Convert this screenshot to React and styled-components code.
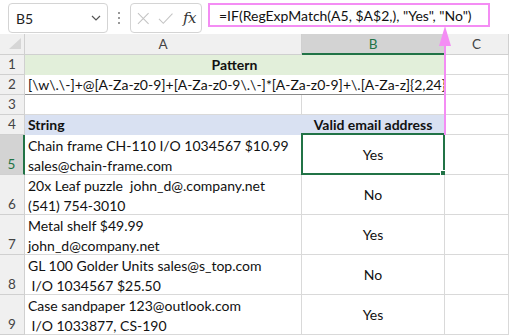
import React from "react";
import styled, { createGlobalStyle, css } from "styled-components";

const GREEN = "#217346";
const PINK = "#f48df4";
const GRID = "#d9d9d9";

const Global = createGlobalStyle`
  html, body { margin: 0; padding: 0; background: #ffffff; }
  body { font-family: Lato, "Liberation Sans", sans-serif; }
`;

const Page = styled.div`
  position: relative;
  width: 509px;
  height: 335px;
  overflow: hidden;
  background: #ffffff;
`;

const TopBar = styled.div`
  display: flex;
  align-items: flex-start;
  height: 34px;
  padding: 3px 0 0 8px;
  box-sizing: border-box;
  background: #ffffff;
`;

const NameBox = styled.div`
  box-sizing: border-box;
  width: 100px;
  height: 30px;
  border: 1px solid #d4d4d4;
  border-radius: 4px;
  display: flex;
  align-items: center;
  justify-content: space-between;
  padding: 0 6px 0 7px;
  font-size: 14px;
  color: #222;
`;

const Dots = styled.div`
  width: 22px;
  height: 30px;
  display: flex;
  flex-direction: column;
  align-items: center;
  justify-content: center;
  gap: 3px;
  & > span {
    width: 2px;
    height: 2px;
    border-radius: 1px;
    background: #777;
  }
`;

const FxBox = styled.div`
  box-sizing: border-box;
  width: 72px;
  height: 30px;
  border: 1px solid #d4d4d4;
  border-radius: 4px;
  display: flex;
  align-items: center;
  padding: 0 5px 0 6px;
  gap: 8px;
`;

const Fx = styled.span`
  font-family: "DejaVu Serif", "Liberation Serif", serif;
  font-style: italic;
  font-size: 15px;
  color: #333;
  margin-left: 2px;
  letter-spacing: -0.5px;
`;

const FormulaBox = styled.div`
  box-sizing: border-box;
  margin-left: 6px;
  width: 282px;
  height: 24px;
  border: 2px solid ${PINK};
  display: flex;
  align-items: center;
  padding-left: 9px;
  font-size: 14px;
  color: #111;
  white-space: pre;
`;

const Sheet = styled.div`
  display: grid;
  grid-template-columns: 25px 277px 143px 64px;
  grid-template-rows: 21px 20px 20px 20px 20px 40px 40px 40px 40px 40px;
  font-size: 14px;
`;

const Corner = styled.div`
  position: relative;
  background: #f0f0f0;
  border-right: 1px solid #d0d0d0;
  border-bottom: 1px solid #d0d0d0;
  box-sizing: border-box;
  &::after {
    content: "";
    position: absolute;
    right: 3px;
    bottom: 5px;
    width: 0;
    height: 0;
    border-left: 12px solid transparent;
    border-bottom: 11px solid #d6d6d6;
  }
`;

const ColHead = styled.div`
  box-sizing: border-box;
  display: flex;
  align-items: center;
  justify-content: center;
  background: ${(p) => (p.$active ? "#d3d3d3" : "#f0f0f0")};
  color: ${(p) => (p.$active ? GREEN : "#444")};
  border-right: 1px solid #d0d0d0;
  border-bottom: ${(p) => (p.$active ? `2px solid ${GREEN}` : "1px solid #d0d0d0")};
  font-size: 13.5px;
`;

const RowHead = styled.div`
  box-sizing: border-box;
  display: flex;
  align-items: flex-end;
  justify-content: center;
  padding-bottom: 1px;
  line-height: 18px;
  background: ${(p) => (p.$active ? "#d3d3d3" : "#f0f0f0")};
  color: ${(p) => (p.$active ? GREEN : "#444")};
  border-right: ${(p) => (p.$active ? `2px solid ${GREEN}` : "1px solid #d0d0d0")};
  border-bottom: 1px solid #d0d0d0;
  font-size: 13.5px;
`;

const Cell = styled.div`
  box-sizing: border-box;
  position: relative;
  display: flex;
  flex-direction: column;
  justify-content: ${(p) => (p.$valign === "top" ? "flex-start" : "center")};
  align-items: ${(p) => (p.$center ? "center" : "flex-start")};
  padding: ${(p) => (p.$valign === "top" ? "1px 3px 0" : "0 3px")};
  line-height: 20px;
  color: #111;
  white-space: pre;
  background: ${(p) => p.$fill || "#ffffff"};
  font-weight: ${(p) => (p.$bold ? 700 : 400)};
  border-right: 1px solid ${(p) => p.$fill || GRID};
  border-bottom: 1px solid ${(p) => p.$bottom || p.$fill || GRID};
  ${(p) =>
    p.$span &&
    css`
      grid-column: span ${p.$span};
    `}
`;

const Selection = styled.div`
  position: absolute;
  left: -1px;
  top: -2px;
  right: -1px;
  bottom: -1px;
  border: 2px solid ${GREEN};
  pointer-events: none;
  &::after {
    content: "";
    position: absolute;
    right: -5px;
    bottom: -5px;
    width: 6px;
    height: 6px;
    background: ${GREEN};
    border: 1px solid #fff;
  }
`;

const Arrow = styled.svg`
  position: absolute;
  left: 437px;
  top: 26px;
`;

const rows = [
  { n: 5, a: ["Chain frame CH-110 I/O 1034567 $10.99", "sales@chain-frame.com"], b: "Yes" },
  { n: 6, a: ["20x Leaf puzzle  john_d@.company.net", "(541) 754-3010"], b: "No" },
  { n: 7, a: ["Metal shelf $49.99", "john_d@company.net"], b: "Yes" },
  { n: 8, a: ["GL 100 Golder Units sales@s_top.com", " I/O 1034567 $25.50"], b: "No" },
  { n: 9, a: ["Case sandpaper 123@outlook.com", " I/O 1033877, CS-190"], b: "Yes" },
];

export default function App() {
  return (
    <Page>
      <Global />
      <TopBar>
        <NameBox>
          <span>B5</span>
          <svg width="10" height="6" viewBox="0 0 10 6">
            <path d="M1 1 L5 5 L9 1" fill="none" stroke="#555" strokeWidth="1.2" />
          </svg>
        </NameBox>
        <Dots>
          <span />
          <span />
          <span />
        </Dots>
        <FxBox>
          <svg width="13" height="13" viewBox="0 0 13 13">
            <path d="M1 1 L12 12 M12 1 L1 12" stroke="#c4c4c4" strokeWidth="1.1" />
          </svg>
          <svg width="16" height="13" viewBox="0 0 16 13">
            <path d="M1 7 L5.5 11.5 L15 1.5" fill="none" stroke="#c4c4c4" strokeWidth="1.1" />
          </svg>
          <Fx>fx</Fx>
        </FxBox>
        <FormulaBox>=IF(RegExpMatch(A5, $A$2,), "Yes", "No")</FormulaBox>
      </TopBar>
      <Sheet>
        <Corner />
        <ColHead>A</ColHead>
        <ColHead $active>B</ColHead>
        <ColHead>C</ColHead>

        <RowHead>1</RowHead>
        <Cell $span={2} $center $bold $fill="#e2efda">Pattern</Cell>
        <Cell />

        <RowHead>2</RowHead>
        <Cell $span={2} $bottom="#8a8a8a">{"[\\w\\.\\-]+@[A-Za-z0-9]+[A-Za-z0-9\\.\\-]*[A-Za-z0-9]+\\.[A-Za-z]{2,24}"}</Cell>
        <Cell />

        <RowHead>3</RowHead>
        <Cell />
        <Cell />
        <Cell />

        <RowHead>4</RowHead>
        <Cell $bold $fill="#d9e1f2">String</Cell>
        <Cell $bold $center $fill="#d9e1f2">Valid email address</Cell>
        <Cell />

        {rows.map((r) => (
          <React.Fragment key={r.n}>
            <RowHead $active={r.n === 5}>{r.n}</RowHead>
            <Cell $valign="top">
              <span>{r.a[0]}</span>
              <span>{r.a[1]}</span>
            </Cell>
            <Cell $center>
              {r.b}
              {r.n === 5 && <Selection />}
            </Cell>
            <Cell />
          </React.Fragment>
        ))}
      </Sheet>
      <Arrow width="16" height="109" viewBox="0 0 16 109">
        <rect x="7" y="8" width="2" height="101" fill={PINK} />
        <path d="M8 0 L14 20 L2 20 Z" fill={PINK} />
      </Arrow>
    </Page>
  );
}
